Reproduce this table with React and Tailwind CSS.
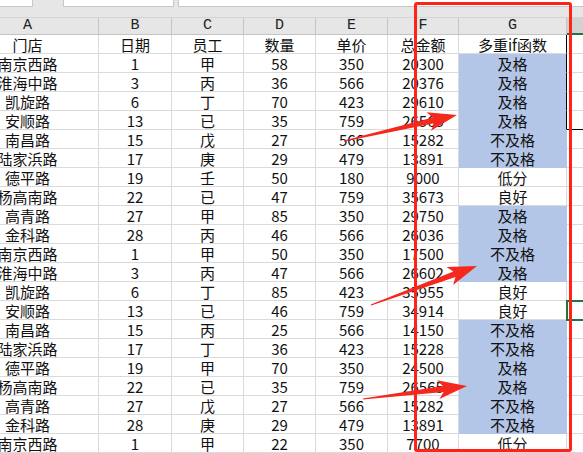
const rows = [
  ['南京西路', 1, '甲', 58, 350, 20300, '及格'],
  ['淮海中路', 3, '丙', 36, 566, 20376, '及格'],
  ['凯旋路', 6, '丁', 70, 423, 29610, '及格'],
  ['安顺路', 13, '已', 35, 759, 26565, '及格'],
  ['南昌路', 15, '戊', 27, 566, 15282, '不及格'],
  ['陆家浜路', 17, '庚', 29, 479, 13891, '不及格'],
  ['德平路', 19, '壬', 50, 180, 9000, '低分'],
  ['杨高南路', 22, '已', 47, 759, 35673, '良好'],
  ['高青路', 27, '甲', 85, 350, 29750, '及格'],
  ['金科路', 28, '丙', 46, 566, 26036, '及格'],
  ['南京西路', 1, '甲', 50, 350, 17500, '不及格'],
  ['淮海中路', 3, '丙', 47, 566, 26602, '及格'],
  ['凯旋路', 6, '丁', 85, 423, 35955, '良好'],
  ['安顺路', 13, '已', 46, 759, 34914, '良好'],
  ['南昌路', 15, '丙', 25, 566, 14150, '不及格'],
  ['陆家浜路', 17, '丁', 36, 423, 15228, '不及格'],
  ['德平路', 19, '甲', 70, 350, 24500, '及格'],
  ['杨高南路', 22, '已', 35, 759, 26565, '及格'],
  ['高青路', 27, '戊', 27, 566, 15282, '不及格'],
  ['金科路', 28, '庚', 29, 479, 13891, '不及格'],
  ['南京西路', 1, '甲', 22, 350, 7700, '低分'],
];

const head = ['门店', '日期', '员工', '数量', '单价', '总金额', '多重if函数'];
const letters = ['A', 'B', 'C', 'D', 'E', 'F', 'G'];
const widths = ['w-[142px]', 'w-[73px]', 'w-[72px]', 'w-[72px]', 'w-[72px]', 'w-[71px]', 'w-[108px]'];

const cjk = { fontFamily: '"Noto Sans CJK SC", sans-serif' };

function isBlue(g) {
  return g === '及格' || g === '不及格';
}

// builds the tapered annotation arrow as a polygon
function arrowPts(x1, y1, x2, y2) {
  const dx = x2 - x1, dy = y2 - y1;
  const L = Math.hypot(dx, dy);
  const ux = dx / L, uy = dy / L;
  const nx = -uy, ny = ux;
  const hl = 27, hw = 9.5, sw = 3;
  const bx = x2 - ux * hl, by = y2 - uy * hl;
  const p = [
    [x1 + nx * 0.6, y1 + ny * 0.6],
    [bx + ux * 3 + nx * sw, by + uy * 3 + ny * sw],
    [bx - ux * 2 + nx * hw, by - uy * 2 + ny * hw],
    [x2, y2],
    [bx - ux * 2 - nx * hw, by - uy * 2 - ny * hw],
    [bx + ux * 3 - nx * sw, by + uy * 3 - ny * sw],
    [x1 - nx * 0.6, y1 - ny * 0.6],
  ];
  return p.map((q) => q[0].toFixed(1) + ',' + q[1].toFixed(1)).join(' ');
}

function Cell({ i, r, children, grade }) {
  const blue = i === 6 && grade && isBlue(grade);
  let right = 'border-r-[#dadada]';
  let bottom = 'border-b-[#dadada]';
  if (blue) { right = 'border-r-[#b4c6e7]'; bottom = 'border-b-[#b4c6e7]'; }
  if (i === 6 && r <= 3) right = 'border-r-black';
  return (
    <div className={`${widths[i]} h-[19px] shrink-0 flex items-center justify-center border-r border-b ${right} ${bottom} ${blue ? 'bg-[#b4c6e7]' : 'bg-white'} text-[15px] text-[#111] leading-[19px] whitespace-nowrap`}>
      {children}
    </div>
  );
}

function Row({ r, cells, grade }) {
  return (
    <div className="flex">
      {cells.map((c, i) => (
        <Cell key={i} i={i} r={r} grade={grade}>{c}</Cell>
      ))}
      <div className={`w-[80px] h-[19px] shrink-0 bg-white border-b ${r === 3 ? 'border-b-black' : 'border-b-[#dadada]'}`} />
    </div>
  );
}

export default function App() {
  return (
    <div className="relative w-[583px] h-[453px] overflow-hidden bg-white" style={cjk}>
      <div className="h-[17px] bg-[#e6e6e6] flex items-start">
        <div className="w-[33px] h-[7px] bg-white border-r border-b border-[#c8c8c8]" />
        <div className="ml-[30px] w-[111px] h-[7px] bg-white border-x border-b border-[#c8c8c8]" />
        <div className="ml-[4px] flex-1 h-[7px] bg-white border-l border-b border-[#c8c8c8]" />
      </div>

      <div className="ml-[-43px]">
        <div className="flex h-[18px] bg-[#e6e6e6] border-t border-[#d4d4d4]">
          {letters.map((l, i) => (
            <div key={l} className={`${widths[i]} h-[17px] shrink-0 flex items-center justify-center border-r border-b border-[#c4c4c4] text-[15px] text-[#222]`}
              style={{ fontFamily: '"Liberation Mono", monospace' }}>
              {l}
            </div>
          ))}
          <div className="w-[80px] h-[17px] shrink-0 bg-[#d2d2d2] border-b-2 border-[#217346]" />
        </div>

        <Row r={-1} cells={head} />
        {rows.map((row, r) => (
          <Row key={r} r={r} cells={row} grade={row[6]} />
        ))}
      </div>

      <div className="absolute left-[566px] top-[300px] w-[24px] h-[21px] border-2 border-[#217346]" />

      <div className="absolute left-[414px] top-[2px] w-[158px] h-[450px] border-[3px] border-[#ff2216] rounded-[3px] pointer-events-none" />

      <svg className="absolute inset-0 pointer-events-none" width="583" height="453">
        <polygon points={arrowPts(344, 141, 457, 115)} fill="#f5281d" />
        <polygon points={arrowPts(371, 305, 477, 266)} fill="#f5281d" />
        <polygon points={arrowPts(363, 399, 467, 386)} fill="#f5281d" />
      </svg>
    </div>
  );
}
